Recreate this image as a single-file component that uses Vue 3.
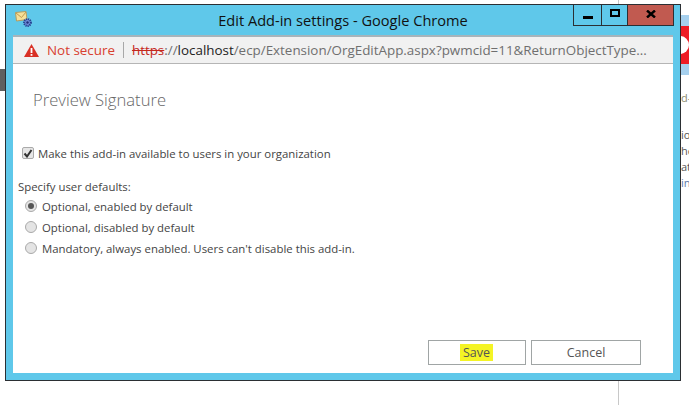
<script setup>
const radios = [
  { label: 'Optional, enabled by default', on: true },
  { label: 'Optional, disabled by default', on: false },
  { label: "Mandatory, always enabled. Users can't disable this add-in.", on: false },
]
</script>

<template>
  <div class="page">
    <div class="bg-line top"></div>
    <div class="bg-line bottom"></div>
    <div class="bg-block"></div>
    <div class="bg-badge"><div class="bg-red"><span class="bg-red-cut"></span></div></div>
    <div class="bg-text">
      <span class="f1">d-</span>
      <span class="f2">io</span>
      <span>he</span>
      <span>at</span>
      <span class="blue">in</span>
    </div>

    <section class="window">
      <header class="titlebar">
        <svg class="app-icon" width="18" height="18" viewBox="0 0 18 18">
          <path d="M0.5 1.5l10.5-1 1 8-10.5 1.5z" fill="#f6e09a" stroke="#b59d5e" />
          <path d="M1 2l5.5 4.5L11 1" fill="none" stroke="#c29c50" />
          <circle cx="12.5" cy="11.5" r="3.4" fill="#6f8ed8" stroke="#24408f" stroke-width="2" stroke-dasharray="1.2 .8" />
          <circle cx="12.5" cy="11.5" r="1.2" fill="#1f2f78" />
        </svg>
        <h1 class="title">Edit Add-in settings - Google Chrome</h1>
        <div class="controls">
          <button class="ctl ctl-min"><span class="min-glyph"></span></button>
          <button class="ctl ctl-max"><span class="max-glyph"></span></button>
          <button class="ctl ctl-close">
            <svg width="10" height="8" viewBox="0 0 10 8"><path d="M1 .5l8 7M9 .5l-8 7" stroke="#000" stroke-width="2.4" /></svg>
          </button>
        </div>
      </header>

      <div class="client">
        <div class="addressbar">
          <svg class="warn" width="15" height="13" viewBox="0 0 15 13">
            <path d="M7.5 0L15 13H0z" fill="#d93025" />
            <rect x="6.6" y="4" width="1.8" height="5" fill="#fff" />
            <rect x="6.6" y="10" width="1.8" height="1.8" fill="#fff" />
          </svg>
          <span class="not-secure">Not secure</span>
          <span class="sep"></span>
          <span class="url"><span class="https">https</span>://<span class="host">localhost</span>/ecp/Extension/OrgEditApp.aspx?pwmcid=11&amp;ReturnObjectType...</span>
        </div>

        <main class="content">
          <h2 class="heading">Preview Signature</h2>

          <label class="check-row">
            <span class="checkbox">
              <svg width="10" height="9" viewBox="0 0 10 9"><path d="M1.5 4.5l2.5 3 4.5-6.5" fill="none" stroke="#333" stroke-width="2" /></svg>
            </span>
            Make this add-in available to users in your organization
          </label>

          <p class="defaults">Specify user defaults:</p>
          <ul class="radios">
            <li v-for="r in radios" :key="r.label" class="radio-row">
              <span class="radio" :class="{ on: r.on }"></span>
              {{ r.label }}
            </li>
          </ul>

          <footer class="actions">
            <button class="btn save"><span class="mark">Save</span></button>
            <button class="btn cancel">Cancel</button>
          </footer>
        </main>
      </div>
    </section>
  </div>
</template>

<style>
html, body { margin: 0; background: #fff; overflow: hidden; }
</style>

<style scoped>
.page {
  position: relative;
  width: 689px;
  height: 405px;
  overflow: hidden;
  background: #fff;
  font-family: "Open Sans", "Noto Sans", sans-serif;
}
.bg-line { position: absolute; left: 618px; width: 1px; background: #c8c8c8; }
.bg-line.top { top: 0; height: 4px; }
.bg-line.bottom { top: 381px; height: 24px; }
.bg-block { position: absolute; left: 0; top: 69px; width: 5px; height: 22px; background: #5f5f5f; }
.bg-badge { position: absolute; left: 681px; top: 15px; width: 8px; height: 60px; background: #a6d0ee; display: flex; align-items: center; }
.bg-red { position: relative; width: 8px; height: 38px; background: #ee1c25; overflow: hidden; }
.bg-red-cut { position: absolute; left: -1px; top: 10px; width: 9px; height: 18px; background: #fff; border-radius: 0 9px 9px 0; }
.bg-text {
  position: absolute; left: 681px; top: 90px;
  display: flex; flex-direction: column;
  font-size: 11px; line-height: 16px; color: #555;
}
.bg-text .f1 { color: #8a8a70; }
.bg-text .f2 { margin-top: 21px; }
.bg-text .blue { color: #5a78a8; }
.window {
  position: absolute;
  left: 5px; top: 4px;
  width: 676px; height: 377px;
  box-sizing: border-box;
  border: 1px solid #2b2f33;
  background: #5fc8ea;
  display: flex;
  flex-direction: column;
}
.titlebar { position: relative; height: 30px; flex: none; display: flex; justify-content: center; align-items: center; }
.app-icon { position: absolute; left: 9px; top: 6px; }
.title { margin: 0; font: 400 14.6px/20px "Open Sans", sans-serif; color: #111; }
.controls { position: absolute; right: 6px; top: 0; display: flex; height: 21px; border: 1px solid #2b2f33; border-top: 0; box-sizing: border-box; }
.ctl { padding: 0; border: 0; background: none; display: flex; justify-content: center; align-items: center; height: 100%; }
.ctl-min { width: 28px; border-right: 1px solid #2b2f33; }
.ctl-max { width: 26px; border-right: 1px solid #2b2f33; }
.ctl-close { width: 45px; background: #c15a50; }
.min-glyph { width: 10px; height: 3px; background: #000; margin-top: 4px; }
.max-glyph { box-sizing: border-box; width: 10px; height: 8px; border: 2px solid #000; margin-bottom: 4px; }
.ctl-close svg { margin-bottom: 3px; }
.client {
  margin: 0 7px 7px;
  flex: 1;
  display: flex;
  flex-direction: column;
  background: #fff;
  border-top: 2px solid #a6b4bb;
}
.addressbar {
  flex: none;
  height: 26px;
  display: flex;
  align-items: center;
  background: #f1f1f1;
  border-bottom: 1px solid #b5b5b5;
  font-size: 13.4px;
  padding-left: 11px;
  white-space: nowrap;
}
.warn { flex: none; margin-right: 8px; }
.not-secure { color: #d8402f; }
.sep { width: 1px; height: 16px; background: #a8a8a8; margin: 0 8px; }
.url { color: #6f6f6f; }
.https { color: #c5281c; text-decoration: line-through; }
.host { color: #222; }
.content {
  flex: 1;
  position: relative;
  display: flex;
  flex-direction: column;
  padding: 0 32px 0 5px;
  color: #444;
  font-size: 11.4px;
}
.heading { margin: 25px 0 0 15px; font: 300 16.6px/22px "Open Sans", sans-serif; color: #666; }
.check-row { margin: 33px 0 0 4px; display: flex; align-items: center; gap: 4px; height: 18px; }
.checkbox {
  box-sizing: border-box; width: 12px; height: 12px; border: 1px solid #aaa; border-radius: 2px; background: #e6e6e6;
  display: flex; align-items: center; justify-content: center;
}
.defaults { margin: 17px 0 0; line-height: 15px; }
.radios { list-style: none; margin: 3px 0 0; padding: 0; display: flex; flex-direction: column; gap: 3px; }
.radio-row { display: flex; align-items: center; gap: 5px; height: 18px; padding-left: 7px; }
.radio {
  box-sizing: border-box; width: 12px; height: 12px; border-radius: 50%; border: 1px solid #aaa; background: #e4e4e4;
  display: flex; align-items: center; justify-content: center;
}
.radio.on::after { content: ""; width: 6px; height: 6px; border-radius: 50%; background: #555; }
.actions { margin-top: auto; margin-bottom: 8px; display: flex; justify-content: flex-end; gap: 5px; }
.btn {
  height: 25px; box-sizing: border-box; border: 1px solid #a0a5a5; background: #fff;
  font: 400 12.5px "Open Sans", sans-serif; color: #555; padding: 0;
}
.save { width: 98px; }
.cancel { width: 110px; }
.mark { display: inline-block; background: #f4f425; padding: 0 3px; line-height: 17px; margin-right: 1px; }
</style>
